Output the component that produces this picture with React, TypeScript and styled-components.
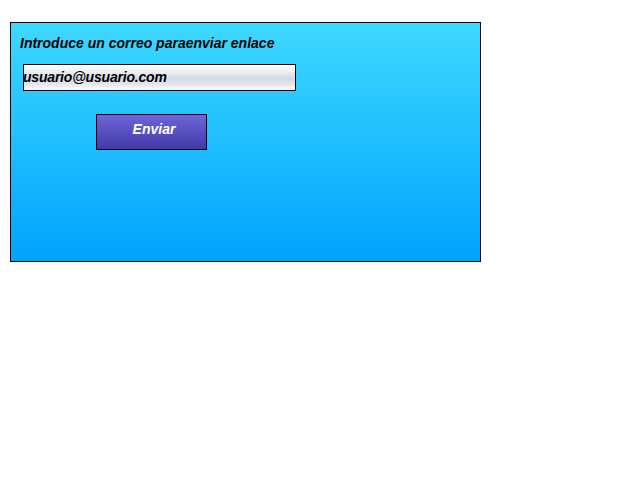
import React from "react";
import styled, { createGlobalStyle } from "styled-components";

const GlobalStyle = createGlobalStyle`
  body {
    margin: 0;
    background: #ffffff;
    font-family: "Liberation Sans", Arial, sans-serif;
  }
`;

const Page = styled.div`
  padding: 22px 0 0 10px;
`;

const Panel = styled.form`
  box-sizing: border-box;
  width: 471px;
  height: 240px;
  border: 1px solid #000;
  background: linear-gradient(to bottom, #3dd9ff 0%, #00a3ff 100%);
  display: flex;
  flex-direction: column;
  align-items: flex-start;
  padding: 12px 0 0 9px;
`;

const Label = styled.label`
  font-size: 14px;
  font-weight: bold;
  font-style: italic;
  color: #000;
  line-height: 16px;
`;

const EmailInput = styled.input`
  box-sizing: border-box;
  width: 273px;
  height: 27px;
  margin: 13px 0 0 3px;
  padding: 0 0 2px 0;
  text-indent: -1px;
  letter-spacing: -0.2px;
  border: 1px solid #000;
  background: linear-gradient(
    to bottom,
    #ffffff 0%,
    #eef0f3 25%,
    #d3d9e0 55%,
    #e6e9ed 80%,
    #ffffff 100%
  );
  font-family: "Liberation Sans", Arial, sans-serif;
  font-size: 14px;
  font-weight: bold;
  font-style: italic;
  color: #000;
  outline: none;
`;

const SendButton = styled.button`
  box-sizing: border-box;
  width: 111px;
  height: 36px;
  margin: 23px 0 0 76px;
  border: 1px solid #000;
  background: linear-gradient(to bottom, #6c66d8 0%, #4338a8 100%);
  color: #fff;
  font-family: "Liberation Sans", Arial, sans-serif;
  font-size: 14px;
  font-weight: bold;
  font-style: italic;
  padding: 0 0 6px 5px;
  cursor: pointer;
`;

export default function App() {
  return (
    <>
      <GlobalStyle />
      <Page>
        <Panel onSubmit={(e) => e.preventDefault()}>
          <Label htmlFor="email">Introduce un correo paraenviar enlace</Label>
          <EmailInput id="email" type="text" defaultValue="usuario@usuario.com" />
          <SendButton type="submit">Enviar</SendButton>
        </Panel>
      </Page>
    </>
  );
}
